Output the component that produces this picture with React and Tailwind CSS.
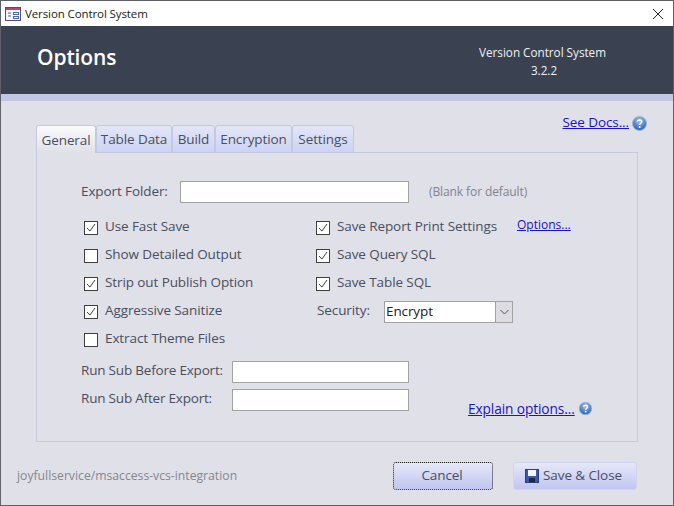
import { useState } from 'react'

const font = "font-['Open_Sans','Noto_Sans',sans-serif]"

function HelpIcon() {
  return (
    <svg width="15" height="15" viewBox="0 0 15 15">
      <defs>
        <radialGradient id="helpFill" cx="50%" cy="30%" r="75%">
          <stop offset="0%" stopColor="#a4c6ec" />
          <stop offset="100%" stopColor="#1f55a4" />
        </radialGradient>
      </defs>
      <circle cx="7.5" cy="7.5" r="7" fill="url(#helpFill)" stroke="#9fb6d8" />
      <path d="M5.3 5.6c.3-1.2 1.2-1.7 2.3-1.7 1.3 0 2.1.8 2.1 1.8 0 1.500-2 1.600-2 3.200" fill="none" stroke="#fff" strokeWidth="1.500" />
      <circle cx="7.700" cy="11" r="1" fill="#fff" />
    </svg>
  )
}

function Check({ label, checked }) {
  return (
    <div className="flex items-center h-7">
      <span className="w-[14px] h-[14px] mt-[1px] ml-[3px] mr-[7px] bg-white border border-[#404040] flex items-center justify-center shrink-0">
        {checked && (
          <svg width="10" height="10" viewBox="0 0 10 10">
            <path d="M1 5l3 3 5-7" fill="none" stroke="#404040" strokeWidth="1" />
          </svg>
        )}
      </span>
      <span>{label}</span>
    </div>
  )
}

function TextBox({ width }) {
  return <div className={`${width} h-[22px] bg-white border border-[#a3a3a3]`} />
}

export default function App() {
  const [tabs] = useState([
    { name: 'General', w: 'w-[60px]' },
    { name: 'Table Data', w: 'w-[76px]' },
    { name: 'Build', w: 'w-[43px]' },
    { name: 'Encryption', w: 'w-[77px]' },
    { name: 'Settings', w: 'w-[62px]' },
  ])

  return (
    <div className={`${font} w-[674px] h-[506px] flex flex-col bg-[#e0e0e8] border border-[#5f6069] text-[13.5px] leading-none tracking-[-0.1px] text-[#494f5e] overflow-hidden`}>
      <div className="h-[25px] shrink-0 bg-white flex items-center pl-1 pr-[9px] text-[#222] text-[11.5px]">
        <svg width="16" height="16" viewBox="0 0 16 16" className="mr-[4px]">
          <rect x="0.500" y="1.500" width="15" height="13" fill="#f4f4fa" stroke="#5a4a78" />
          <rect x="1" y="2" width="14" height="2" fill="#b04a78" />
          <path d="M3 7h3M3 10h3" stroke="#4a6ea8" strokeWidth="1" />
          <rect x="8.500" y="6.500" width="5" height="2" fill="none" stroke="#4a6ea8" />
          <rect x="8.500" y="10.500" width="5" height="2" fill="none" stroke="#4a6ea8" />
        </svg>
        <span className="flex-1">Version Control System</span>
        <svg width="12" height="12" viewBox="0 0 12 12">
          <path d="M1 1l10 10M11 1L1 11" stroke="#222" strokeWidth="1" />
        </svg>
      </div>

      <div className="h-[68px] shrink-0 bg-[#3a4252] text-white flex items-center justify-between pl-[36px] pr-[67px]">
        <span className="text-[21px] font-semibold mb-[6px]">Options</span>
        <div className="text-center text-[11.7px] leading-[18px] text-[#f0f0f4] tracking-normal mb-[-2px]">
          <div>Version Control System</div>
          <div className="pl-[3px]">3.2.2</div>
        </div>
      </div>
      <div className="h-[7px] shrink-0 bg-[#c2c7e1]" />

      <div className="flex-1 flex flex-col pl-[35px] pr-[35px]">
        <div className="h-[24px] mt-[10px] flex items-center justify-end gap-[3px] -mr-[9px]">
          <a className="text-[#1a13c8] underline text-[13.5px]">See Docs...</a>
          <HelpIcon />
        </div>

        <div className="flex mt-[-10px]">
          {tabs.map((t, i) => (
            <div
              key={t.name}
              className={`${t.w} h-[28px] pt-[2px] flex items-center justify-center border border-[#c5c9dd] rounded-t-[3px] ${
                i === 0
                  ? 'bg-gradient-to-b from-[#fbfbfd] to-[#e0e0e8] border-b-0 z-10'
                  : 'bg-gradient-to-b from-[#e3e6f7] to-[#cdd3f3]'
              }`}
            >
              {t.name}
            </div>
          ))}
        </div>

        <div className="h-[290px] -mt-[1px] border border-[#c5c9dd] pl-[44px] pt-[28px] flex flex-col">
          <div className="flex items-center h-[22px]">
            <span className="w-[99px] mb-[1px]">Export Folder:</span>
            <TextBox width="w-[229px]" />
            <span className="ml-[20px] text-[12px] text-[#80838f]">(Blank for default)</span>
          </div>

          <div className="flex mt-[10px]">
            <div className="w-[232px] flex flex-col">
              <Check label="Use Fast Save" checked />
              <Check label="Show Detailed Output" />
              <Check label="Strip out Publish Option" checked />
              <Check label="Aggressive Sanitize" checked />
              <Check label="Extract Theme Files" />
            </div>
            <div className="flex flex-col">
              <div className="flex items-center">
                <Check label="Save Report Print Settings" checked />
                <a className="ml-[20px] mb-[4px] text-[#1a13c8] underline text-[12px] tracking-normal">Options...</a>
              </div>
              <Check label="Save Query SQL" checked />
              <Check label="Save Table SQL" checked />
              <div className="flex items-center h-7 pl-[4px]">
                <span className="w-[67px]">Security:</span>
                <div className="w-[129px] h-[22px] mt-[2px] bg-white border border-[#a3a3a3] flex items-center justify-between pl-[1px] text-[#222]">
                  <span>Encrypt</span>
                  <span className="w-[17px] h-full bg-[#dcdce2] border-l border-[#a3a3a3] flex items-center justify-center">
                    <svg width="9" height="6" viewBox="0 0 9 6">
                      <path d="M.5 1l4 4 4-4" fill="none" stroke="#555" />
                    </svg>
                  </span>
                </div>
              </div>
            </div>
          </div>

          <div className="flex items-end mt-[8px]">
            <div className="flex flex-col gap-[6px]">
              <div className="flex items-center">
                <span className="w-[151px] mb-[3px] tracking-[-0.2px]">Run Sub Before Export:</span>
                <TextBox width="w-[177px]" />
              </div>
              <div className="flex items-center">
                <span className="w-[151px] mb-[3px] tracking-[-0.2px]">Run Sub After Export:</span>
                <TextBox width="w-[177px]" />
              </div>
            </div>
            <div className="ml-[59px] flex items-center gap-[3px] mb-[-5px]">
              <a className="text-[#1a13c8] underline text-[13.7px]">Explain options...</a>
              <span className="scale-90 flex"><HelpIcon /></span>
            </div>
          </div>
        </div>

        <div className="flex items-center mt-[20px] -ml-[19px] mr-[1px]">
          <span className="flex-1 text-[12.2px] text-[#85878f] tracking-normal">joyfullservice/msaccess-vcs-integration</span>
          <button className="w-[100px] h-[28px] pr-[2px] rounded-[3px] border border-dotted border-[#222] bg-gradient-to-b from-[#e6e8f8] to-[#c0c6f0]">
            Cancel
          </button>
          <button className="ml-[20px] w-[124px] h-[28px] pr-[3px] rounded-[3px] border border-[#d0d4ee] bg-gradient-to-b from-[#e6e8f8] to-[#c0c6f0] flex items-center justify-center gap-[4px]">
            <svg width="14" height="14" viewBox="0 0 14 14">
              <rect x="0.500" y="0.500" width="13" height="13" fill="#3c5aa8" stroke="#2c3e78" />
              <rect x="3" y="1" width="8" height="6" fill="#f4f6fc" />
              <rect x="4" y="9" width="6" height="4" fill="#20283c" />
            </svg>
            Save &amp; Close
          </button>
        </div>
      </div>
    </div>
  )
}
